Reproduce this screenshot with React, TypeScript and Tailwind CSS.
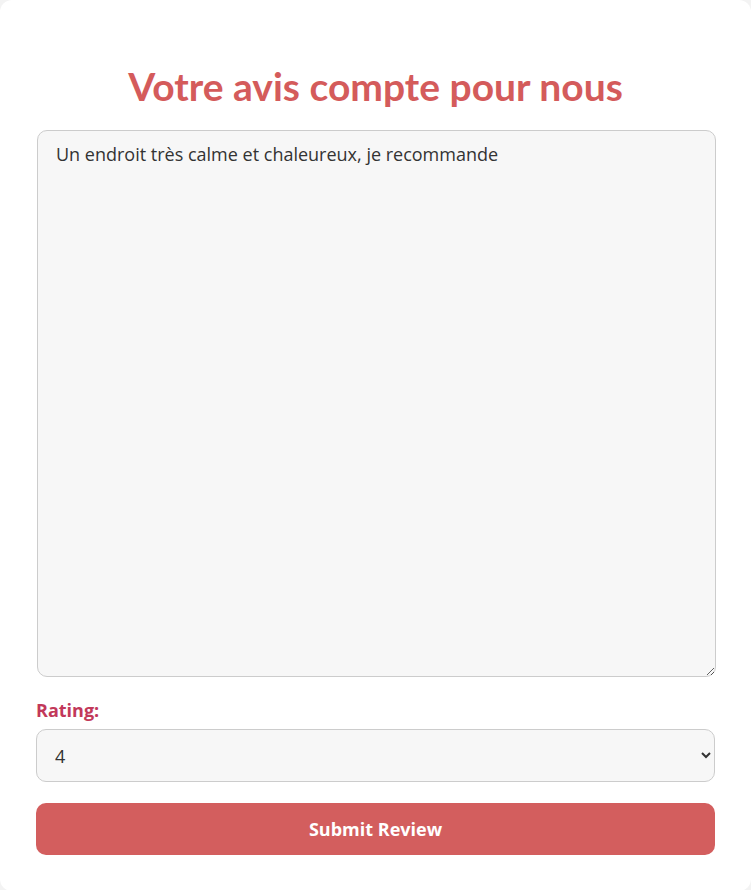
import { useState } from "react";

export default function App() {
  const [text, setText] = useState("Un endroit très calme et chaleureux, je recommande");
  const [rating, setRating] = useState("4");

  return (
    <div className="min-h-[890px] bg-[#f3f3f3] font-['Open_Sans',sans-serif]">
      <div className="min-h-[890px] rounded-xl bg-white px-9 pt-[62px] pb-9">
        <h1 className="text-center font-['Lato',sans-serif] text-[39px] font-bold leading-[48px] text-[#d45b5b]">
          Votre avis compte pour nous
        </h1>
        <form className="mt-[20px] flex flex-col" onSubmit={(e) => e.preventDefault()}>
          <textarea
            value={text}
            onChange={(e) => setText(e.target.value)}
            className="ml-px h-[547px] w-[679px] rounded-[10px] border border-[#cccccc] bg-[#f7f7f7] px-[18px] py-[10px] text-[18px] leading-[27px] text-[#333333] outline-none"
          />
          <label className="mt-[21px] text-[18px] font-bold leading-6 text-[#c2385a]">Rating:</label>
          <select
            value={rating}
            onChange={(e) => setRating(e.target.value)}
            className="mt-[7px] h-[53px] w-full rounded-[10px] border border-[#cccccc] bg-[#f7f7f7] px-[14px] text-[18px] text-[#333333] outline-none"
          >
            <option value="1">1</option>
            <option value="2">2</option>
            <option value="3">3</option>
            <option value="4">4</option>
            <option value="5">5</option>
          </select>
          <button
            type="submit"
            className="mt-[21px] h-[52px] w-full rounded-[10px] bg-[#d35e5e] text-[18px] font-bold text-white"
          >
            Submit Review
          </button>
        </form>
      </div>
    </div>
  );
}
